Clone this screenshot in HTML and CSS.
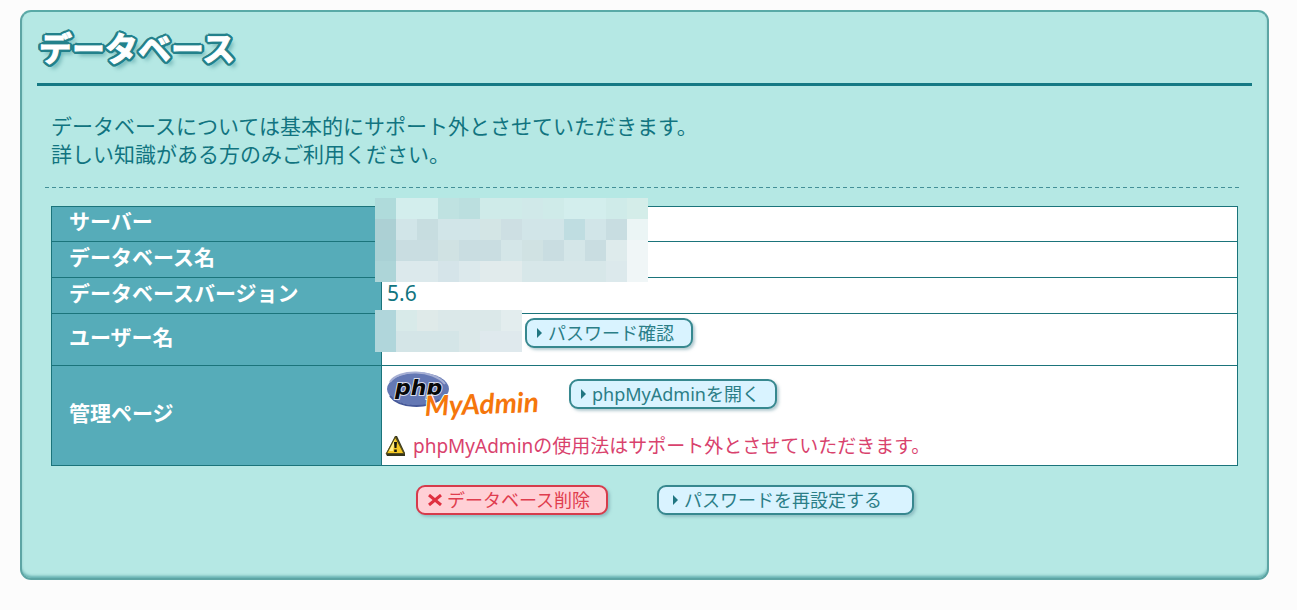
FILE: index.html
```
<!DOCTYPE html>
<html lang="ja">
<head>
<meta charset="utf-8">
<meta name="viewport" content="width=device-width, initial-scale=1">
<title>データベース</title>
<link rel="stylesheet" href="styles.css">
</head>
<body>
<main class="panel">
  <header class="panel-head"><h1 class="title">データベース</h1></header>
  <p class="lead">データベースについては基本的にサポート外とさせていただきます。<br>詳しい知識がある方のみご利用ください。</p>
  <table class="info">
    <colgroup><col class="col-label"><col></colgroup>
    <tbody>
      <tr>
        <th scope="row">サーバー</th>
        <td class="cell-server">
          <div class="anchor">
            <svg class="mask mask-server" width="273" height="84" viewBox="0 0 13 4" shape-rendering="crispEdges" aria-hidden="true">
              <path fill="#d0e9e9" d="M0 0h13v4H0z"/>
              <path fill="#afdbdb" d="M0 0h1v1H0z"/><path fill="#acd0d4" d="M0 1h1v1H0z"/><path fill="#a9d1d5" d="M0 2h1v1H0z"/><path fill="#add5d8" d="M0 3h1v1H0z"/>
              <path fill="#d3eeed" d="M1 0h2v1H1zM9 0h2v1H9z"/><path fill="#bfe2e1" d="M3 0h1v1H3z"/><path fill="#bbdfdf" d="M4 0h1v1H4z"/><path fill="#cfebe9" d="M5 0h2v1H5zM8 0h1v1H8zM11 0h1v1h-1z"/><path fill="#d4ede9" d="M12 0h1v1h-1z"/>
              <path fill="#d1e5e8" d="M1 1h1v1H1zM3 1h2v1H3zM7 1h2v1H7zM10 1h1v1h-1z"/><path fill="#c7dde0" d="M2 1h1v1H2z"/><path fill="#d3e5e5" d="M5 1h1v1H5z"/><path fill="#cddfe3" d="M6 1h1v1H6z"/><path fill="#bfdde1" d="M9 1h1v1H9z"/><path fill="#c8dde1" d="M11 1h1v1h-1z"/><path fill="#ebf5f5" d="M12 1h1v1h-1z"/>
              <path fill="#c9dde1" d="M1 2h2v1H1zM4 2h2v1H4zM8 2h1v1H8zM10 2h1v1h-1z"/><path fill="#d0e2e3" d="M3 2h1v1H3zM7 2h1v1H7z"/><path fill="#d4e6e8" d="M6 2h1v1H6zM9 2h1v1H9z"/><path fill="#deebec" d="M11 2h1v1h-1z"/><path fill="#f0f6f7" d="M12 2h1v2h-1z"/>
              <path fill="#dce9ec" d="M1 3h2v1H1zM4 3h1v1H4zM11 3h1v1h-1z"/><path fill="#d5e4e9" d="M3 3h1v1H3z"/><path fill="#e1ebec" d="M5 3h2v1H5z"/><path fill="#d7e7e9" d="M7 3h4v1H7z"/>
            </svg>
          </div>
        </td>
      </tr>
      <tr><th scope="row">データベース名</th><td></td></tr>
      <tr><th scope="row">データベースバージョン</th><td>5.6</td></tr>
      <tr>
        <th scope="row">ユーザー名</th>
        <td class="cell-user">
          <div class="anchor user-row">
            <svg class="mask mask-user" width="147" height="42" viewBox="0 0 7 2" shape-rendering="crispEdges" aria-hidden="true">
              <path fill="#dbe8e9" d="M0 0h7v2H0z"/><path fill="#b0d6db" d="M0 0h1v2H0z"/><path fill="#d8eae9" d="M1 0h1v1H1z"/><path fill="#dfeae9" d="M2 0h1v1H2z"/><path fill="#d4e5e7" d="M1 1h3v1H1z"/><path fill="#e3edee" d="M6 0h1v1H6z"/><path fill="#dfe9ed" d="M5 1h2v1H5z"/>
            </svg>
            <button type="button" class="btn btn-confirm"><svg class="arrow" width="6" height="10" viewBox="0 0 6 10" aria-hidden="true"><path d="M0 0l5 5-5 5z"/></svg>パスワード確認</button>
          </div>
        </td>
      </tr>
      <tr>
        <th scope="row">管理ページ</th>
        <td class="cell-admin">
          <div class="admin-row">
            <svg class="logo" width="154" height="56" viewBox="0 0 154 56" role="img" aria-label="phpMyAdmin">
              <ellipse cx="33" cy="19" rx="31" ry="16.500" fill="#6478b4"/>
              <path d="M5 12C13-1 48-1 60 14" fill="none" stroke="#a6afd4" stroke-width="2"/>
              <path d="M5 26c9 12 35 13 49 4" fill="none" stroke="#465999" stroke-width="2"/>
              <text class="logo-php" x="10" y="25">php</text>
              <text class="logo-admin" x="40" y="46" transform="rotate(-2 40 46)">MyAdmin</text>
            </svg>
            <button type="button" class="btn btn-open"><svg class="arrow" width="6" height="10" viewBox="0 0 6 10" aria-hidden="true"><path d="M0 0l5 5-5 5z"/></svg>phpMyAdminを開く</button>
          </div>
          <p class="warning">
            <svg width="22" height="22" viewBox="0 0 22 22" aria-hidden="true">
              <path d="M10 1h2l8 17v3H2l-1-2z" fill="#35351d"/><path d="M10.500 2L19 18.500H1.500z" fill="#f5c824" stroke="#5a501a" stroke-width="1.200"/><path d="M10 4L4 16h4z" fill="#fff08a"/><path d="M9 7h3l-.5 6h-2zM9.200 14.500h2.600V17H9.200z" fill="#17170c"/>
            </svg>
            <span>phpMyAdminの使用法はサポート外とさせていただきます。</span>
          </p>
        </td>
      </tr>
    </tbody>
  </table>
  <div class="actions">
    <button type="button" class="btn btn-delete"><svg class="cross" width="14" height="12" viewBox="0 0 14 12" aria-hidden="true"><path d="M1 1l12 10M13 1L1 11"/></svg>データベース削除</button>
    <button type="button" class="btn btn-reset"><svg class="arrow" width="6" height="10" viewBox="0 0 6 10" aria-hidden="true"><path d="M0 0l5 5-5 5z"/></svg>パスワードを再設定する</button>
  </div>
</main>
</body>
</html>
```
FILE: styles.css
```
* { box-sizing: border-box; }
body {
  margin: 0;
  padding: 10px 28px 30px 20px;
  background: #fcfcfc;
  color: #117480;
  font: 21px/28px "Noto Sans", "Noto Sans CJK JP", sans-serif;
}
.panel {
  padding: 0 15px 63px;
  border: 2px solid #5da5a4;
  border-top-color: #59aaa7;
  border-radius: 11px;
  background: #b5e8e4;
  box-shadow: inset 0 -3px 3px -1px #62aeae;
}
.panel-head {
  padding: 11px 0 12px 2px;
  border-bottom: 3px solid #157984;
}
.title {
  margin: 0;
  color: #fff;
  font-family: "Noto Sans CJK JP", sans-serif;
  font-size: 33px;
  font-weight: 700;
  line-height: 48px;
  -webkit-text-stroke: 1px #fff;
  text-shadow: 3px 0 #23818b, -3px 0 #23818b, 0 3px #23818b, 0 -3px #23818b,
    2px 2px #23818b, -2px 2px #23818b, 2px -2px #23818b, -2px -2px #23818b,
    3px 1px #23818b, 3px -1px #23818b, -3px 1px #23818b, -3px -1px #23818b,
    1px 3px #23818b, -1px 3px #23818b, 4px 5px 4px #6eb3b4;
}
.lead {
  margin: 0 11px 18px 8px;
  padding: 26px 6px 20px;
  background: repeating-linear-gradient(90deg, #438f97 0 4px, transparent 4px 7px) left bottom / 100% 1px no-repeat;
}
.info {
  width: calc(100% - 28px);
  margin-left: 14px;
  border-collapse: collapse;
  border-color: #1b747b;
  table-layout: fixed;
}
.col-label { width: 330px; }
.info th, .info td {
  height: 36px;
  border: 1px solid #1b747b;
  padding: 0 5px 6px;
  text-align: left;
  vertical-align: middle;
}
.info tr:first-child > * { height: 35px; }
.info th { padding-left: 17px; background: #56acb9; color: #fff; }
.info td { background: #fff; }
.info .cell-server { vertical-align: top; }
.info .cell-user, .info .cell-admin { padding-top: 4px; padding-bottom: 4px; }
.info .cell-user { height: 52px; vertical-align: top; }
.info .cell-admin { padding-left: 3px; }
.anchor { position: relative; }
.user-row { padding-left: 138px; }
.mask { position: absolute; left: -12px; }
.mask-server { top: -9px; }
.mask-user { top: -8px; }
.btn {
  display: flex;
  align-items: center;
  height: 30px;
  padding: 0 10px;
  gap: 5px;
  border: 2px solid #37888f;
  border-radius: 9px;
  background: #d9f3ff;
  color: #2b7e87;
  box-shadow: 2px 2px 3px #6b9aa580;
  font: 18px/26px "Noto Sans", "Noto Sans CJK JP", sans-serif;
  white-space: nowrap;
}
.arrow { flex: none; fill: #217681; }
.btn-confirm { width: 168px; }
.btn-open { width: 208px; margin-top: 9px; }
.btn-reset { width: 257px; padding-left: 14px; }
.btn-delete {
  width: 192px;
  border-color: #d63b4b;
  background: #ffd0d6;
  color: #df3d4e;
}
.cross { flex: none; fill: none; stroke: #df3040; stroke-width: 3; }
.admin-row { display: flex; align-items: flex-start; gap: 30px; }
.logo { display: block; overflow: visible; }
.logo-php {
  font: italic 700 22px "DejaVu Sans", sans-serif;
  fill: #080808;
  stroke: #d9ddec;
  stroke-width: 2px;
  paint-order: stroke;
}
.logo-admin {
  font: italic 700 28px Lato, sans-serif;
  fill: #f5760c;
  stroke: #fff;
  stroke-width: 2px;
  paint-order: stroke;
}
.warning {
  display: flex;
  align-items: center;
  gap: 6px;
  margin: 6px 0 1px;
  color: #d9426d;
  font-size: 19px;
}
.warning svg { flex: none; }
.actions { display: flex; gap: 49px; margin: 19px 0 0 379px; }
```
